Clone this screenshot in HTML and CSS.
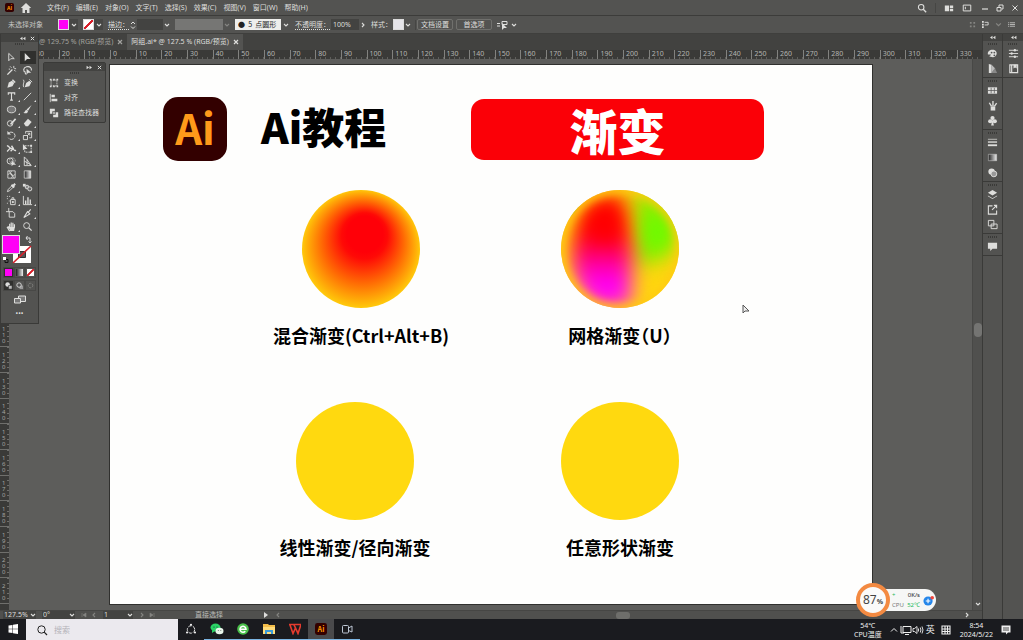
FILE: index.html
```html
<!DOCTYPE html>
<html lang="zh-CN">
<head>
<meta charset="utf-8">
<title>Ai教程</title>
<link rel="stylesheet" href="styles.css">
</head>
<body>
<svg class="defs" aria-hidden="true">
  <symbol id="chev" viewBox="0 0 6 6"><path d="M1 2l2 2 2-2" fill="none" stroke="currentColor" stroke-width="1.1"/></symbol>
  <symbol id="next" viewBox="0 0 6 6"><path d="M2 1l2 2-2 2" fill="none" stroke="currentColor" stroke-width="1.1"/></symbol>
  <symbol id="prev" viewBox="0 0 6 6"><path d="M4 1L2 3l2 2" fill="none" stroke="currentColor" stroke-width="1.1"/></symbol>
  <symbol id="dbl" viewBox="0 0 8 6"><path d="M4 1L1 3l3 2zM7.500 1l-3 2 3 2z" fill="currentColor"/></symbol>
  <symbol id="x" viewBox="0 0 6 6"><path d="M1 1l4 4M5 1L1 5" stroke="currentColor" stroke-width="1.2"/></symbol>
</svg>
<div class="app">
  <header class="menubar">
    <svg class="ai-mark" viewBox="0 0 10 10"><rect width="10" height="10" rx="2" fill="#330000"/><text x="5" y="7.500" text-anchor="middle" class="mark-text">Ai</text></svg>
    <button class="bare home" aria-label="主页"><svg viewBox="0 0 12 12"><path d="M6 1L.8 6H2.500v5h2.500V8h2v3h2.500V6h1.700z" fill="currentColor"/></svg></button>
    <nav class="menus">
      <button class="bare">文件(F)</button><button class="bare">编辑(E)</button><button class="bare">对象(O)</button><button class="bare">文字(T)</button><button class="bare">选择(S)</button><button class="bare">效果(C)</button><button class="bare">视图(V)</button><button class="bare">窗口(W)</button><button class="bare">帮助(H)</button>
    </nav>
    <div class="window-tools">
      <button class="bare" aria-label="搜索"><svg viewBox="0 0 12 12"><circle cx="5" cy="5" r="3.300" fill="none" stroke="currentColor" stroke-width="1.300"/><path d="M7.500 7.500L11 11" stroke="currentColor" stroke-width="1.600"/></svg></button>
      <i class="divider"></i>
      <button class="bare" aria-label="排列文档"><svg viewBox="0 0 12 12"><path d="M1 3h5v7H1zM7 3h4v3H7zM7 7h4v3H7z" fill="currentColor"/></svg></button>
      <button class="bare" aria-label="工作区"><svg viewBox="0 0 12 12"><path d="M1.500 2.500h9v7h-9zM4 4.500v3" fill="none" stroke="currentColor" stroke-width="1.200"/></svg></button>
    </div>
    <div class="window-buttons">
      <button class="bare" aria-label="最小化"><svg viewBox="0 0 8 8"><path d="M1 5h6" stroke="currentColor" stroke-width="1.200"/></svg></button>
      <button class="bare" aria-label="还原"><svg viewBox="0 0 8 8"><path d="M1 3.500h4V7H1zM3 3V1h4v4H5.500" fill="none" stroke="currentColor"/></svg></button>
      <button class="bare" aria-label="关闭"><svg viewBox="0 0 8 8"><path d="M1.500 1.500l5 5M6.500 1.500l-5 5" stroke="currentColor"/></svg></button>
    </div>
  </header>

  <div class="options">
    <span class="selection">未选择对象</span>
    <button class="swatch-btn" aria-label="填色"><i class="sw magenta"></i><svg class="chev"><use href="#chev"/></svg></button>
    <button class="swatch-btn" aria-label="描边颜色"><i class="sw none"></i><svg class="chev"><use href="#chev"/></svg></button>
    <div class="field">
      <label class="dotted" for="stroke">描边：</label>
      <svg class="stepper" viewBox="0 0 6 10"><path d="M1 4l2-2 2 2M1 6.500l2 2 2-2" fill="none" stroke="currentColor"/></svg>
      <input id="stroke" class="box stroke-input" type="text">
      <svg class="chev"><use href="#chev"/></svg>
    </div>
    <div class="field"><span class="profile"></span><svg class="chev dim"><use href="#chev"/></svg></div>
    <div class="field brush-field"><select class="brush" aria-label="画笔"><option>●&nbsp;&nbsp;5&nbsp;&nbsp;点圆形</option></select><svg class="chev"><use href="#chev"/></svg></div>
    <div class="field">
      <label class="dotted" for="opacity">不透明度：</label>
      <input id="opacity" class="box opacity-input" type="text" value="100%">
      <svg class="chev"><use href="#next"/></svg>
    </div>
    <div class="field style-field"><span>样式：</span><i class="sw light"></i><svg class="chev"><use href="#chev"/></svg></div>
    <i class="divider"></i>
    <div class="option-buttons"><button class="outlined">文档设置</button><button class="outlined">首选项</button></div>
    <button class="bare align" aria-label="选择相似对象"><svg viewBox="0 0 12 10"><path d="M0 3.500h3M0 6h3M5 1.500h5v3H5z" stroke="currentColor" fill="none"/><path d="M5 3v7l2-2h3z" fill="currentColor"/></svg><svg class="chev"><use href="#chev"/></svg></button>
    <div class="options-end">
      <svg viewBox="0 0 8 8" class="dim"><path d="M1 1h2v2H1zM5 1h2v2H5zM1 5h2v2H1zM5 5h2v2H5z" fill="currentColor"/></svg>
      <svg viewBox="0 0 8 8"><path d="M0 0h2v2H0zM0 3h2v2H0zM0 6h2v2H0z" fill="currentColor"/><path d="M3 1.500h4v3H3" fill="none" stroke="currentColor"/></svg>
      <svg class="chev dim"><use href="#chev"/></svg>
      <svg viewBox="0 0 8 8"><path d="M2 2h6M2 4h6M2 6h6M0 2h1M0 4h1M0 6h1" stroke="currentColor" stroke-width=".8"/></svg>
    </div>
  </div>

  <div class="workspace">
    <main class="document">
      <div class="tabs">
        <div class="tab"><span>@ 129.75 % (RGB/预览)</span><svg class="close"><use href="#x"/></svg></div>
        <div class="tab active"><span>阿组.ai* @ 127.5 % (RGB/预览)</span><svg class="close"><use href="#x"/></svg></div>
      </div>
      <div class="hruler"><span>30</span><span>20</span><span>10</span><span>0</span><span>10</span><span>20</span><span>30</span><span>40</span><span>50</span><span>60</span><span>70</span><span>80</span><span>90</span><span>100</span><span>110</span><span>120</span><span>130</span><span>140</span><span>150</span><span>160</span><span>170</span><span>180</span><span>190</span><span>200</span><span>210</span><span>220</span><span>230</span><span>240</span><span>250</span><span>260</span><span>270</span><span>280</span><span>290</span><span>300</span><span>310</span><span>320</span><span>330</span></div>
      <div class="stage">
        <div class="vruler"><span>1<br>0</span><span>2<br>0</span><span>3<br>0</span><span>4<br>0</span><span>5<br>0</span><span>6<br>0</span><span>7<br>0</span><span>8<br>0</span><span>9<br>0</span><span>1<br>0<br>0</span><span>1<br>1<br>0</span><span>1<br>2<br>0</span><span>1<br>3<br>0</span><span>1<br>4<br>0</span><span>1<br>5<br>0</span><span>1<br>6<br>0</span><span>1<br>7<br>0</span><span>1<br>8<br>0</span><span>1<br>9<br>0</span><span>2<br>0<br>0</span><span>2<br>1<br>0</span></div>
        <section class="artboard">
          <div class="lesson-head">
            <div class="logo">Ai</div>
            <h1 class="title">Ai教程</h1>
            <div class="banner">渐变</div>
          </div>
          <div class="row first">
            <figure class="sample">
              <svg class="ball" viewBox="0 0 118 118">
                <defs><radialGradient id="blend" gradientUnits="userSpaceOnUse" cx="59" cy="59" r="60" fx="63" fy="44" fr="18"><stop offset="0" stop-color="#ff0008"/><stop offset=".12" stop-color="#ff0a06"/><stop offset=".55" stop-color="#ff6a04"/><stop offset=".85" stop-color="#ffac08"/><stop offset="1" stop-color="#ffce0c"/></radialGradient></defs>
                <circle cx="59" cy="59" r="59" fill="url(#blend)"/>
              </svg>
              <figcaption>混合渐变(Ctrl+Alt+B)</figcaption>
            </figure>
            <figure class="sample">
              <svg class="ball" viewBox="0 0 118 118">
                <defs>
                  <clipPath id="ballclip"><circle cx="59" cy="59" r="59"/></clipPath>
                  <linearGradient id="warm" x1="0" y1="0" x2="0" y2="1"><stop offset=".32" stop-color="#ff0000"/><stop offset=".8" stop-color="#ff00fa"/></linearGradient>
                  <filter id="soft" x="-80%" y="-80%" width="260%" height="260%" color-interpolation-filters="sRGB"><feGaussianBlur stdDeviation="10"/></filter>
                  <filter id="rim" x="-20%" y="-20%" width="140%" height="140%" color-interpolation-filters="sRGB"><feGaussianBlur stdDeviation="4"/></filter>
                </defs>
                <g clip-path="url(#ballclip)">
                  <rect width="118" height="118" fill="#ffd60f"/>
                  <path d="M74 2Q108 6 116 44L110 60Q98 74 76 74z" fill="#80f000" filter="url(#soft)"/>
                  <path d="M26 14Q42 2 62 6L72 60 68 116H36Q14 100 10 70 10 34 26 14z" fill="url(#warm)" filter="url(#soft)"/>
                  <ellipse cx="97" cy="42" rx="11" ry="17" fill="#66ff00" filter="url(#soft)"/>
                  <ellipse cx="44" cy="36" rx="12" ry="16" fill="#ff0000" filter="url(#soft)"/>
                  <circle cx="59" cy="59" r="60" fill="none" stroke="#ffc814" stroke-width="7" filter="url(#rim)"/>
                  <ellipse cx="12" cy="20" rx="2" ry="8" transform="rotate(40 12 20)" fill="#86d010" filter="url(#rim)"/>
                </g>
              </svg>
              <figcaption class="half">网格渐变（U）</figcaption>
            </figure>
          </div>
          <div class="row second">
            <figure class="sample"><span class="ball flat"></span><figcaption>线性渐变/径向渐变</figcaption></figure>
            <figure class="sample"><span class="ball flat"></span><figcaption>任意形状渐变</figcaption></figure>
          </div>
          <svg class="pointer" viewBox="0 0 8 10"><path d="M1 1v8l2-2h4z" fill="#eee" stroke="#555"/></svg>
        </section>
        <div class="vscroll"><i></i><svg class="chev"><use href="#chev"/></svg></div>
      </div>
      <footer class="status">
        <label class="status-field zoom-level"><input type="text" value="127.5%" aria-label="缩放"><svg class="chev"><use href="#chev"/></svg></label>
        <label class="status-field angle"><input type="text" value="0°" aria-label="旋转"><svg class="chev"><use href="#chev"/></svg></label>
        <span class="pager dim"><svg viewBox="0 0 6 6"><path d="M1 1v4M5 1L2 3l3 2z" fill="currentColor" stroke="currentColor" stroke-width=".6"/></svg><svg class="chev"><use href="#prev"/></svg></span>
        <label class="status-field page"><input type="text" value="1" aria-label="画板"><svg class="chev"><use href="#chev"/></svg></label>
        <span class="pager dim"><svg class="chev"><use href="#next"/></svg><svg viewBox="0 0 6 6"><path d="M5 1v4M1 1l3 2-3 2z" fill="currentColor" stroke="currentColor" stroke-width=".6"/></svg></span>
        <span class="current-tool">直接选择</span>
        <svg class="chev" viewBox="0 0 6 6"><path d="M1 0l4 3-4 3z" fill="currentColor"/></svg>
        <div class="hscroll"><svg class="chev dim"><use href="#prev"/></svg><i></i><svg class="chev"><use href="#next"/></svg></div>
      </footer>

      <aside class="tools">
        <div class="panel-head"><svg class="dbl"><use href="#dbl"/></svg><svg class="close"><use href="#x"/></svg></div>
        <i class="grip"></i>
        <div class="tool-grid">
          <button aria-label="选择"><svg viewBox="0 0 12 12"><path d="M3 1.500v8l2.200-2.200H9z" fill="none" stroke="currentColor"/></svg></button>
          <button class="on" aria-label="直接选择"><svg viewBox="0 0 12 12"><path d="M3 1v9l2.500-2.500H9.500z" fill="currentColor"/></svg></button>
          <button aria-label="魔棒"><svg viewBox="0 0 12 12"><path d="M1.500 10.500L7 5" stroke="currentColor" stroke-width="1.500"/><path d="M8.500 1v2.500M11 4H9M4.500 1.500L6 3M10.500 7L9 5.500M3 4.500h1.500" stroke="currentColor"/></svg></button>
          <button aria-label="套索"><svg viewBox="0 0 12 12"><path d="M4 8C1 7 1 3 5 2s6 2 5 4M4 8c-1 1 0 2 1 2" fill="none" stroke="currentColor" stroke-width="1.200"/><path d="M5 4v6l2-1.500h3z" fill="currentColor"/></svg></button>
          <button class="more" aria-label="钢笔"><svg viewBox="0 0 12 12"><path d="M1.500 10.500L3 5l3.500-2L9 5.500 7 9z" fill="currentColor"/><path d="M7 2l3 3" stroke="currentColor" stroke-width="1.600"/></svg></button>
          <button aria-label="曲率"><svg viewBox="0 0 12 12"><path d="M3 10L4.500 5.500 8 3l2 2-2 4z" fill="currentColor"/><path d="M1 2c3 1-1 5 1 8M8 1.500l3 3" fill="none" stroke="currentColor"/></svg></button>
          <button class="more" aria-label="文字"><svg viewBox="0 0 12 12"><path d="M2.500 4V2h7v2M6 2v8M4.500 10h3" fill="none" stroke="currentColor" stroke-width="1.200"/></svg></button>
          <button class="more" aria-label="直线"><svg viewBox="0 0 12 12"><path d="M2 10l8-8" stroke="currentColor"/></svg></button>
          <button class="more" aria-label="椭圆"><svg viewBox="0 0 12 12"><ellipse cx="6" cy="6" rx="4.500" ry="3.600" fill="#777" stroke="currentColor"/></svg></button>
          <button class="more" aria-label="画笔"><svg viewBox="0 0 12 12"><path d="M10.500 1L5 6l1.500 1.500z" fill="currentColor"/><path d="M5 6.500C3 6.500 3.500 9 1.500 9.500 4 11 6.500 10 6.500 8z" fill="currentColor"/></svg></button>
          <button class="more" aria-label="Shaper"><svg viewBox="0 0 12 12"><circle cx="4.500" cy="7" r="3" fill="none" stroke="currentColor"/><path d="M5 8l5.500-6" stroke="currentColor" stroke-width="1.800"/></svg></button>
          <button class="more" aria-label="橡皮擦"><svg viewBox="0 0 12 12"><path d="M2 7l4.500-5L10.500 5.500 6.500 10H4z" fill="currentColor"/></svg></button>
          <button class="more" aria-label="旋转"><svg viewBox="0 0 12 12"><path d="M3 3.500a4 4 0 1 1-.5 5" fill="none" stroke="currentColor" stroke-dasharray="5 1"/><path d="M1.500 1v4h4z" fill="currentColor"/></svg></button>
          <button class="more" aria-label="缩放"><svg viewBox="0 0 12 12"><path d="M1.500 6h4.500v4.500H1.500zM4 4V1.500h6.500v7H8M5.500 6.500l3-3M6 3.500h2.500V6" fill="none" stroke="currentColor"/></svg></button>
          <button class="more" aria-label="宽度"><svg viewBox="0 0 12 12"><path d="M1 3c3 0 2 3 5 3s2 3 5 2M1 9c2 0 2-4 5-3M6 3l2 3-3 3" fill="none" stroke="currentColor" stroke-width="1.500"/></svg></button>
          <button aria-label="自由变换"><svg viewBox="0 0 12 12"><path d="M3 3h7v7H3z" fill="none" stroke="currentColor" stroke-dasharray="2 1"/><path d="M1 1v7l2-1.500h3z" fill="currentColor"/><path d="M9 2h2v2H9zM9 9h2v2H9z" fill="currentColor"/></svg></button>
          <button class="more" aria-label="形状生成器"><svg viewBox="0 0 12 12"><circle cx="4.500" cy="5.500" r="3.300" fill="none" stroke="currentColor"/><circle cx="7" cy="5" r="3" fill="none" stroke="currentColor" stroke-dasharray="1 1"/><path d="M6 5v6l2-1.500h3z" fill="currentColor"/></svg></button>
          <button class="more" aria-label="透视网格"><svg viewBox="0 0 12 12"><path d="M2.500 1v9.500H10L5.500 4 2.500 1M5.500 4v6M2.500 5.500L10 10" fill="none" stroke="currentColor"/></svg></button>
          <button aria-label="网格"><svg viewBox="0 0 12 12"><path d="M2 2h8v8H2zM2 6q2-2 4 0t4 0M6 2q-2 2 0 4t0 4M3 2l6 8" fill="none" stroke="currentColor" stroke-width=".9"/></svg></button>
          <button aria-label="渐变"><svg viewBox="0 0 12 12"><defs><linearGradient id="gr"><stop stop-color="#222"/><stop offset="1" stop-color="#eee"/></linearGradient></defs><path d="M2.500 2h7v8h-7z" fill="url(#gr)" stroke="currentColor" stroke-width=".8"/></svg></button>
          <button class="more" aria-label="吸管"><svg viewBox="0 0 12 12"><path d="M1.500 10.500l1-2.500 4-4 1.500 1.500-4 4z" fill="none" stroke="currentColor"/><path d="M6 3l3 3M8 4l2-2" stroke="currentColor" stroke-width="2.200"/></svg></button>
          <button aria-label="混合"><svg viewBox="0 0 12 12"><path d="M1 2h3v3H1z" fill="currentColor"/><circle cx="5.500" cy="5.500" r="2" fill="#888" stroke="currentColor"/><circle cx="8.500" cy="7.500" r="2.200" fill="#666" stroke="currentColor"/></svg></button>
          <button class="more" aria-label="符号喷枪"><svg viewBox="0 0 12 12"><path d="M5 5h5v5.500H5zM6.500 5V3h2v2" fill="none" stroke="currentColor"/><circle cx="7.500" cy="7.700" r="1.200" fill="currentColor"/><path d="M1 1.500h1M3.500 1.500h1M1 4h1M3 6.500h1M1 9h1" stroke="currentColor"/></svg></button>
          <button class="more" aria-label="柱形图"><svg viewBox="0 0 12 12"><path d="M1.500 1v9.500H11" fill="none" stroke="currentColor"/><path d="M4 10V6M6.500 10V2.500M9 10V5" stroke="currentColor" stroke-width="1.500"/></svg></button>
          <button aria-label="画板"><svg viewBox="0 0 12 12"><path d="M3 0v4M0 4h7.500l2 2v4H3.500V4" fill="none" stroke="currentColor"/></svg></button>
          <button class="more" aria-label="切片"><svg viewBox="0 0 12 12"><path d="M2 10.500L6 4l2.500 2.500zM7 4.500L9.500 1.500" fill="none" stroke="currentColor" stroke-width="1.200"/></svg></button>
          <button class="more" aria-label="抓手"><svg viewBox="0 0 12 12"><path d="M4 11L1.500 7l1-.6L4 8V3M5.700 7V1.500M7.500 7V2M9.200 7V3.500" fill="none" stroke="currentColor" stroke-width="1.300"/><path d="M3.500 6.500h6.300L8.800 11H4.500z" fill="currentColor"/></svg></button>
          <button aria-label="放大镜"><svg viewBox="0 0 12 12"><circle cx="5" cy="5" r="3.200" fill="none" stroke="currentColor"/><path d="M7.500 7.500l3 3" stroke="currentColor" stroke-width="1.500"/></svg></button>
        </div>
        <svg class="fill-stroke" viewBox="0 0 34 30">
          <path d="M12 11h18v17H12z" fill="#fff"/><path d="M17.500 16.500h7v6h-7z" fill="#555" stroke="#333"/><path d="M12 28L30 11" stroke="#d81f2a" stroke-width="1.600"/>
          <rect x="1.500" y=".5" width="17" height="18" fill="#ff00f6" stroke="#ddd"/>
          <path d="M25 3h4v5M26.500 1L25 3l1.500 2M27.500 6.500L29 8l1.500-1.500" fill="none" stroke="#ddd"/>
          <path d="M4 24.500h3v3H4z" fill="none" stroke="#111"/><path d="M2 22h3v3H2z" fill="#fff"/>
        </svg>
        <div class="trio"><button aria-label="颜色" class="on"><i class="mini magenta"></i></button><button aria-label="渐变填充"><i class="mini grad"></i></button><button aria-label="无"><i class="mini none"></i></button></div>
        <div class="trio modes">
          <button class="on" aria-label="正常绘图"><svg viewBox="0 0 10 10"><circle cx="4" cy="4" r="2.500" fill="#ddd"/><path d="M5 5h4v4H5z" fill="#bbb" stroke="#333" stroke-width=".6"/></svg></button>
          <button aria-label="背面绘图"><svg viewBox="0 0 10 10"><path d="M5 5h4v4H5z" fill="#999"/><circle cx="4.500" cy="4.500" r="2.500" fill="#555" stroke="#ddd"/></svg></button>
          <button aria-label="内部绘图" class="dim"><svg viewBox="0 0 10 10"><circle cx="5" cy="5" r="2.500" fill="none" stroke="currentColor" stroke-dasharray="2 1"/></svg></button>
        </div>
        <button class="bare screen-mode" aria-label="屏幕模式"><svg viewBox="0 0 14 10"><path d="M5.500 1h7v5.500h-7z" fill="#777" stroke="currentColor"/><path d="M1.500 3.500h6V8h-6z" fill="#777" stroke="currentColor"/></svg></button>
        <button class="bare dots" aria-label="更多">•••</button>
      </aside>

      <aside class="float-panel">
        <div class="panel-head"><svg class="dbl flip"><use href="#dbl"/></svg><svg class="close"><use href="#x"/></svg></div>
        <i class="grip"></i>
        <button class="bare"><svg viewBox="0 0 12 12"><path d="M2.500 2.500h7v7h-7z" fill="none" stroke="currentColor" stroke-dasharray="1.500 1"/><path d="M1 1h2v2H1zM9 1h2v2H9zM1 9h2v2H1zM9 9h2v2H9zM5 1h2v2H5zM5 9h2v2H5z" fill="currentColor"/></svg>变换</button>
        <button class="bare"><svg viewBox="0 0 12 12"><path d="M1.500 1v10" stroke="currentColor"/><path d="M3 2h4v3H3zM3 7h7v3H3z" fill="currentColor"/></svg>对齐</button>
        <button class="bare"><svg viewBox="0 0 12 12"><path d="M1 1h6v3H4v3H1zM11 11H5V8h3V5h3z" fill="currentColor"/><path d="M5 5h2v2H5z" fill="currentColor"/></svg>路径查找器</button>
      </aside>
    </main>

    <aside class="dock">
      <div class="dock-head"><svg class="dbl"><use href="#dbl"/></svg></div>
      <div class="group"><i class="grip"></i>
        <button aria-label="颜色"><svg viewBox="0 0 12 12"><path d="M1 7C0 3 5 1 8.500 2.500S11 10 6.500 10 2 9 4 8 2 7.500 1 7z" fill="currentColor"/><circle cx="5" cy="5" r="1" fill="#555"/><circle cx="8" cy="5" r="1" fill="#555"/><circle cx="8" cy="8" r="1" fill="#555"/></svg></button>
        <button aria-label="颜色参考"><svg viewBox="0 0 12 12"><path d="M2 1l3 1v9H2z" fill="currentColor"/><path d="M5 2l4 4-4 5z" fill="#bbb"/><path d="M8.500 5.500l2.500 5.500H5z" fill="#888"/></svg></button></div>
      <div class="group"><i class="grip"></i>
        <button aria-label="色板"><svg viewBox="0 0 12 12"><path d="M1 2.500h10v7H1z" fill="currentColor"/><path d="M1 6h10M4.500 3v6M8 3v6" stroke="#555" stroke-width=".8"/></svg></button>
        <button aria-label="画笔面板"><svg viewBox="0 0 12 12"><path d="M4 7h5v4.500H4z" fill="currentColor"/><path d="M5 7L2.500 3M6.500 7V1M8 7l2.500-3.500" stroke="currentColor" stroke-width="1.500"/></svg></button>
        <button aria-label="符号"><svg viewBox="0 0 12 12"><circle cx="6" cy="3.300" r="2.300" fill="currentColor"/><circle cx="3.500" cy="6.800" r="2.300" fill="currentColor"/><circle cx="8.500" cy="6.800" r="2.300" fill="currentColor"/><path d="M6 4l1.500 7.500h-3z" fill="currentColor"/></svg></button></div>
      <div class="group"><i class="grip"></i>
        <button aria-label="描边面板"><svg viewBox="0 0 12 12"><path d="M1 2.500h10" stroke="currentColor" stroke-width=".8"/><path d="M1 5.500h10" stroke="currentColor" stroke-width="1.500"/><path d="M1 9h10" stroke="currentColor" stroke-width="2"/></svg></button>
        <button aria-label="渐变面板"><svg viewBox="0 0 12 12"><path d="M1.500 2.500h9v7h-9z" fill="url(#gr)" stroke="#ccc" stroke-width=".6"/></svg></button>
        <button aria-label="透明度面板"><svg viewBox="0 0 12 12"><circle cx="5" cy="5" r="3.500" fill="currentColor"/><circle cx="7.500" cy="7.500" r="3.200" fill="#999" stroke="currentColor"/></svg></button></div>
      <div class="group"><i class="grip"></i>
        <button aria-label="图层"><svg viewBox="0 0 12 12"><path d="M6 1l5 3-5 3-5-3zM1 7l5 3 5-3v1l-5 3-5-3z" fill="currentColor"/></svg></button>
        <button aria-label="资源导出"><svg viewBox="0 0 12 12"><path d="M6 2H1.500v9h9V7M5.500 6.500L10 2M7.500 1.500h3v3" fill="none" stroke="currentColor" stroke-width="1.200"/></svg></button>
        <button aria-label="画板面板"><svg viewBox="0 0 12 12"><path d="M1.500 1.500h6v6h-6zM4.500 5.500h6.500v5H4.500z" fill="none" stroke="currentColor"/></svg></button></div>
      <div class="group"><i class="grip"></i>
        <button aria-label="注释"><svg viewBox="0 0 12 12"><path d="M1 2h10v6.500H6L3.500 11V8.500H1z" fill="currentColor"/></svg></button></div>
    </aside>
    <aside class="dock outer">
      <div class="dock-head"><svg class="dbl"><use href="#dbl"/></svg></div>
      <div class="group"><i class="grip"></i>
        <button aria-label="属性"><svg viewBox="0 0 12 12"><path d="M1 2.500h10M1 6h10M1 9.500h10" stroke="currentColor"/><circle cx="7.500" cy="2.500" r="1.300" fill="currentColor"/><circle cx="4" cy="6" r="1.300" fill="currentColor"/><circle cx="7.500" cy="9.500" r="1.300" fill="currentColor"/></svg></button>
        <button aria-label="库"><svg viewBox="0 0 12 12"><path d="M2 2h8.500v8.500H2zM4 2v8" fill="none" stroke="currentColor" stroke-width="1.300"/><path d="M6 2h3.500v4L7.700 5 6 6z" fill="currentColor"/></svg></button></div>
    </aside>
  </div>

  <footer class="taskbar">
    <button class="task" aria-label="开始"><svg viewBox="0 0 12 12"><path d="M1.500 2.500l4-.6v3.800h-4zM6 1.800l5-.8v4.700H6zM1.500 6.200h4V10l-4-.6zM6 6.200h5V11l-5-.8z" fill="#fff"/></svg></button>
    <label class="search"><svg viewBox="0 0 12 12"><circle cx="5.500" cy="5.500" r="3.700" fill="none" stroke="#222"/><path d="M8.200 8.200L11 11" stroke="#222" stroke-width="1.200"/></svg><input type="text" placeholder="搜索" aria-label="搜索"></label>
    <button class="task" aria-label="小娜"><svg viewBox="0 0 12 12"><circle cx="6" cy="6.500" r="3.700" fill="none" stroke="#ddd" stroke-dasharray="3.500 1.200"/><circle cx="6" cy="1.800" r="1" fill="#fff"/><circle cx="2" cy="9.500" r="1" fill="#fff"/><circle cx="10" cy="9.500" r="1" fill="#fff"/></svg></button>
    <button class="task open" aria-label="微信"><svg class="wide" viewBox="0 0 14 12"><ellipse cx="5.500" cy="4.500" rx="5" ry="4" fill="#2bd465"/><path d="M2 7v3l3-2z" fill="#2bd465"/><ellipse cx="9.500" cy="8" rx="4" ry="3.300" fill="#e8f5ea"/><circle cx="4" cy="4" r=".6" fill="#124"/><circle cx="7" cy="4" r=".6" fill="#124"/><circle cx="8.300" cy="7.500" r=".5" fill="#666"/><circle cx="10.800" cy="7.500" r=".5" fill="#666"/></svg></button>
    <button class="task open" aria-label="浏览器"><svg viewBox="0 0 12 12"><circle cx="6" cy="6" r="5.800" fill="#49c04a"/><path d="M3 6.200h6A3 3 0 1 0 8.300 8.200" fill="none" stroke="#fff" stroke-width="1.500"/></svg></button>
    <button class="task open" aria-label="文件资源管理器"><svg viewBox="0 0 12 12"><path d="M0 1h5l1 1h6v9H0z" fill="#f4bd49"/><path d="M0 4h12v7H0z" fill="#ffdc7b"/><path d="M2 7h8v4H8V9H4v2H2z" fill="#3b9bd8"/></svg></button>
    <button class="task open" aria-label="WPS"><svg viewBox="0 0 12 12"><path d="M0 1.500h12L9 10.500 6.500 5 4 10.500 1 2M5 2l4 8" fill="none" stroke="#e63b2e" stroke-width="1.600"/></svg></button>
    <button class="task open current" aria-label="Illustrator"><svg viewBox="0 0 10 10"><rect width="10" height="10" rx="2" fill="#330000"/><text x="5" y="7.300" text-anchor="middle" class="mark-text">Ai</text></svg></button>
    <button class="task open" aria-label="录屏"><svg viewBox="0 0 12 12"><rect x="1.500" y="2.500" width="6" height="7.500" rx="1" fill="none" stroke="#bcc6d4"/><path d="M7.500 5l3.500-2v6L7.500 7.500" fill="none" stroke="#bcc6d4"/></svg></button>
    <div class="tray">
      <div class="two-line"><span>54℃</span><span>CPU温度</span></div>
      <svg viewBox="0 0 12 12"><path d="M3 7.500l3-3 3 3" fill="none" stroke="#eee"/></svg>
      <svg viewBox="0 0 12 12"><path d="M3 2.500h8v6H3zM5 10.500h4M1 2v7h3" fill="none" stroke="#eee"/></svg>
      <svg viewBox="0 0 12 12"><path d="M1 4.500h1.500L5 2.500v7L2.500 7.500H1zM6.500 4.500v3M8.300 3.500q1.200 2.500 0 5M10 2.500q2 3.500 0 7" fill="none" stroke="#eee" stroke-width=".9"/></svg>
      <span class="ime">英</span>
      <svg class="keys" viewBox="0 0 12 12"><path d="M2 2h8v8H2zM2 5h8M2 7.500h8M5 2v8M7.500 2v8" fill="none" stroke="#eee" stroke-width="1.100"/></svg>
      <div class="two-line clock"><span>8:54</span><span>2024/5/22</span></div>
      <svg class="note" viewBox="0 0 12 12"><path d="M1.500 1.500h9v7H8l-2 2v-2H1.500z" fill="#eee"/><path d="M3 4h6M3 6h6" stroke="#222" stroke-width=".8"/></svg>
    </div>
  </footer>

  <div class="monitor">
    <div class="gauge"><b>87</b><small>%</small></div>
    <div class="stats"><p><span class="green">+</span><span class="rate">0K/s</span></p><p><span>CPU</span><span class="green">52℃</span></p></div>
    <div class="boost"><svg viewBox="0 0 12 12"><circle cx="5.500" cy="6.500" r="5" fill="#2486ea"/><path d="M5.500 4v5M3 6.500h5" stroke="#fff" stroke-width="1.200"/><circle cx="10" cy="3" r="2" fill="#f0463c"/></svg></div>
  </div>
</div>
</body>
</html>
```
FILE: styles.css
```css
* { box-sizing: border-box; }
body { margin: 0; font-family: "Noto Sans", "Noto Sans CJK SC", sans-serif; font-size: 7px; line-height: 10px; color: #dededc; background: #535351; }
button, input, select { font: inherit; color: inherit; margin: 0; padding: 0; border: 0; background: none; min-width: 0; }
button { display: flex; align-items: center; justify-content: center; white-space: nowrap; }
svg { display: block; flex: none; width: 12px; height: 12px; }
i { display: block; flex: none; }
.defs { position: absolute; width: 0; height: 0; }
.chev, .close { width: 6px; height: 6px; }
.dbl { width: 7px; height: 5px; }
.flip { transform: rotate(180deg); }
.dim { color: #858582; }
.divider { width: 1px; height: 10px; background: #464644; }
.mark-text { font: bold 6px "Noto Sans CJK SC", sans-serif; fill: #ff9a00; }

.app { position: relative; height: 100vh; display: flex; flex-direction: column; overflow: hidden; }

.menubar { height: 16px; flex: none; display: flex; align-items: center; padding: 0 4px 0 5px; background: #535351; border-bottom: 1px solid #3c3c3a; }
.ai-mark { width: 9px; height: 9px; }
.home { margin-left: 6px; }
.menus { display: flex; gap: 7px; margin-left: 15px; }
.window-tools { display: flex; align-items: center; gap: 8px; margin-left: auto; margin-right: 9px; }
.window-tools svg { width: 10px; height: 10px; }
.window-buttons { display: flex; gap: 7px; }
.window-buttons svg { width: 8px; height: 8px; }

.options { height: 18px; flex: none; display: flex; align-items: center; padding: 0 8px; background: #535351; border-bottom: 1px solid #3f3f3d; }
.selection { margin-right: 15px; color: #c4c4c1; }
.swatch-btn { gap: 2px; margin-right: 5px; padding-right: 1px; background: #474745; }
.sw { width: 11px; height: 11px; border: 1px solid #ddd; }
.magenta { background: #ff00f6; }
.none { background: linear-gradient(135deg, #fff 42%, #d81f2a 43%, #d81f2a 57%, #fff 58%); }
.light { background: #e6e5ea; }
.field { display: flex; align-items: center; gap: 1px; margin-right: 5px; white-space: nowrap; }
.dotted { text-decoration: underline dotted 1px; text-underline-offset: 2px; }
.stepper { width: 6px; height: 10px; }
.box { height: 11px; background: #434341; }
.stroke-input { width: 26px; }
.profile { width: 48px; height: 11px; background: #767674; }
.brush-field { gap: 2px; margin-right: 6px; }
.brush { appearance: none; width: 46px; height: 11px; padding: 0 3px; background: #eeeeec; color: #222; line-height: 11px; font-family: "Noto Sans CJK SC", sans-serif; }
.opacity-input { width: 28px; padding-left: 2px; }
.style-field { margin-right: 4px; }
.option-buttons { display: flex; gap: 3px; margin-left: 1px; }
.outlined { width: 36px; height: 11px; border: 1px solid #70706d; border-radius: 2px; }
.align { gap: 2px; margin-left: 5px; }
.align svg:first-child { height: 10px; }
.options-end { display: flex; align-items: center; gap: 6px; margin-left: auto; }
.options-end svg { width: 7px; height: 7px; }

.workspace { flex: 1; min-height: 0; display: flex; }
.document { position: relative; flex: 1; min-width: 0; display: flex; flex-direction: column; background: #5d5d5b; }
.tabs { height: 16px; flex: none; display: flex; padding-left: 38px; background: #424240; }
.tab { display: flex; align-items: center; gap: 4px; padding: 0 4px 0 1px; color: #a2a29f; white-space: nowrap; }
.tab.active { background: #535351; color: #dededc; padding-left: 4px; }
.hruler { height: 9px; flex: none; display: flex; padding-left: 33px; background: #3a3a38; overflow: hidden; }
.hruler span { flex: 1 1 0; min-width: 0; padding-left: 2px; line-height: 8px; font-size: 7px; color: #b4b4b1; border-left: 1px solid #82827f; background: repeating-linear-gradient(90deg, transparent 0 4px, #5f5f5c 4px 5px) 0 100% / 100% 2px no-repeat; }
.stage { flex: 1; min-height: 0; display: flex; }
.vruler { width: 9px; flex: none; display: flex; flex-direction: column; padding: 6px 0; background: #3a3a38; }
.vruler span { flex: 1 1 0; min-height: 0; display: flex; flex-direction: column; justify-content: flex-end; padding: 0 0 2px 2px; font-size: 6px; line-height: 6px; color: #a4a4a1; border-bottom: 1px solid #6f6f6c; background: repeating-linear-gradient(0deg, transparent 0 4px, #6f6f6c 4px 5px) 100% 0 / 2px 100% no-repeat; }
.vscroll { width: 10px; flex: none; display: flex; flex-direction: column; align-items: center; justify-content: space-between; padding: 264px 0 3px; background: #50504e; border-left: 1px solid #484846; }
.vscroll i { width: 8px; height: 14px; border-radius: 4px; background: #747472; }

.artboard { position: relative; flex: 1; min-width: 0; margin: 6px 100px 6px 101px; padding-top: 32px; background: #fefefd; outline: 1px solid #30302e; color: #000; font-family: "Noto Sans CJK SC", sans-serif; }
.lesson-head { display: grid; grid-template-columns: 64px 1fr 293px; column-gap: 34px; align-items: center; padding: 0 108px 0 53px; }
.logo { height: 64px; border-radius: 15px; background: #330000; color: #ff9a1a; font-size: 42px; line-height: 59px; font-weight: 700; text-align: center; }
.title { align-self: start; margin: 0; font-size: 42px; line-height: 58px; font-weight: 900; white-space: nowrap; }
.banner { height: 61px; border-radius: 13px; background: #fb0007; color: #fff; font-size: 48px; line-height: 61px; font-weight: 900; text-align: center; }
.row { display: flex; justify-content: flex-end; padding-right: 164px; }
.first { margin-top: 29px; gap: 83px; }
.second { margin-top: 54px; gap: 89px; }
.sample { width: 176px; margin: 0; display: flex; flex-direction: column; align-items: center; gap: 14px; font-size: 18px; line-height: 26px; font-weight: 700; white-space: nowrap; }
.ball { width: 118px; height: 118px; }
.flat { border-radius: 50%; background: #ffd90f; }
.half { font-feature-settings: "halt"; }
.pointer { position: absolute; left: 83%; top: 239px; width: 8px; height: 10px; }

.status { height: 9px; flex: none; display: flex; align-items: center; gap: 6px; padding-left: 3px; line-height: 9px; background: #50504e; border-top: 1px solid #464644; }
.status-field { display: flex; align-items: center; justify-content: space-between; background: #434341; }
.status-field input { flex: 1; width: 26px; height: 8px; padding-left: 1px; line-height: 8px; }
.zoom-level, .angle { width: 33px; }
.page { width: 30px; }
.pager { display: flex; gap: 4px; }
.pager svg { width: 6px; height: 6px; }
.current-tool { width: 96px; padding-left: 34px; line-height: 8px; color: #b8b8b5; }
.hscroll { flex: 1; display: flex; align-items: center; justify-content: space-between; padding-right: 12px; }
.hscroll i { width: 14px; height: 7px; border-radius: 3px; background: #6e6e6b; }

.tools { position: absolute; left: 0; top: 0; width: 39px; padding-bottom: 4px; background: #535351; border: 1px solid #3a3a38; border-top: 0; }
.panel-head { height: 8px; display: flex; align-items: center; justify-content: flex-end; gap: 4px; padding-right: 3px; background: #434341; }
.panel-head .close { width: 5px; height: 5px; }
.grip { width: 10px; height: 2px; margin: 1px auto; background: repeating-linear-gradient(90deg, #3a3a38 0 1px, transparent 1px 2px); }
.tool-grid { display: grid; grid-template-columns: 16px 16px; grid-auto-rows: 13px; justify-content: center; padding-top: 5px; }
.tool-grid button { position: relative; }
.tool-grid svg { width: 11px; height: 11px; }
.tool-grid .on, .trio .on { background: #30302e; }
.more::after { content: ""; position: absolute; right: 0; bottom: 1px; border: 1px solid; border-color: transparent #ddd #ddd transparent; }
.fill-stroke { width: 34px; height: 30px; margin-top: 2px; }
.trio { display: flex; margin: 2px 2px 0; }
.trio button { width: 11px; height: 11px; border: 1px solid #484846; }
.trio svg { width: 9px; height: 9px; }
.mini { width: 7px; height: 7px; }
.grad { background: linear-gradient(90deg, #222, #eee); }
.screen-mode, .dots { margin: 4px auto 0; }
.screen-mode svg { width: 14px; height: 10px; }
.dots { font-size: 7px; }

.float-panel { position: absolute; left: 43px; top: 28px; width: 63px; padding-bottom: 2px; background: #535351; border: 1px solid #3a3a38; border-radius: 2px; }
.float-panel .bare { height: 15px; gap: 5px; margin-left: 5px; }
.float-panel .bare svg { width: 10px; height: 10px; }

.dock { width: 20px; flex: none; border-left: 1px solid #3a3a38; background: #535351; }
.outer { width: 21px; }
.dock-head { height: 7px; display: flex; align-items: center; justify-content: center; background: #434341; }
.group { padding: 1px 0; border-bottom: 1px solid #3a3a38; }
.group button { width: 100%; height: 15px; }
.group .grip { margin-bottom: 1px; }
.group svg { width: 11px; height: 11px; }

.taskbar { height: 21px; flex: none; display: flex; background: #1a1b1f; color: #eee; }
.task { width: 26px; border-bottom: 1px solid transparent; }
.task .wide { width: 14px; }
.open { border-bottom-color: #7cb6e4; }
.current { background: #4a4a4c; }
.search { width: 152px; display: flex; align-items: center; gap: 6px; padding-left: 10px; background: #ebe9ee; }
.search input { flex: 1; font-size: 8px; color: #333; }
.search input::placeholder { color: #b4b2b8; opacity: 1; }
.tray { flex: 1; display: flex; align-items: center; justify-content: flex-end; padding-right: 11px; font-size: 7px; }
.two-line { display: flex; flex-direction: column; align-items: center; line-height: 9px; margin-right: 6px; }
.ime { font-size: 9px; margin: 0 5px 0 2px; }
.tray .keys { margin-right: 8px; }
.clock { margin-right: 7px; }

.monitor { position: absolute; right: 87px; bottom: 23px; height: 34px; display: flex; align-items: center; color: #777; }
.gauge { width: 34px; height: 34px; z-index: 1; display: flex; align-items: center; justify-content: center; border: 4px solid #f38a42; border-radius: 50%; background: #fafafa; color: #444; }
.gauge b { font-size: 12px; font-weight: 400; }
.gauge small { font-size: 7px; font-weight: 700; padding-top: 3px; }
.stats { width: 42px; height: 22px; margin-left: -12px; padding: 1px 0 0 14px; background: #f6f7f6; }
.stats p { margin: 0; display: flex; justify-content: space-between; gap: 1px; font-size: 6px; white-space: nowrap; }
.green { color: #24b95b; }
.rate { color: #222; }
.boost { width: 16px; height: 22px; display: flex; align-items: center; justify-content: center; background: #f6f7f6; border-radius: 0 11px 11px 0; }
.boost svg { width: 11px; height: 11px; }
```
